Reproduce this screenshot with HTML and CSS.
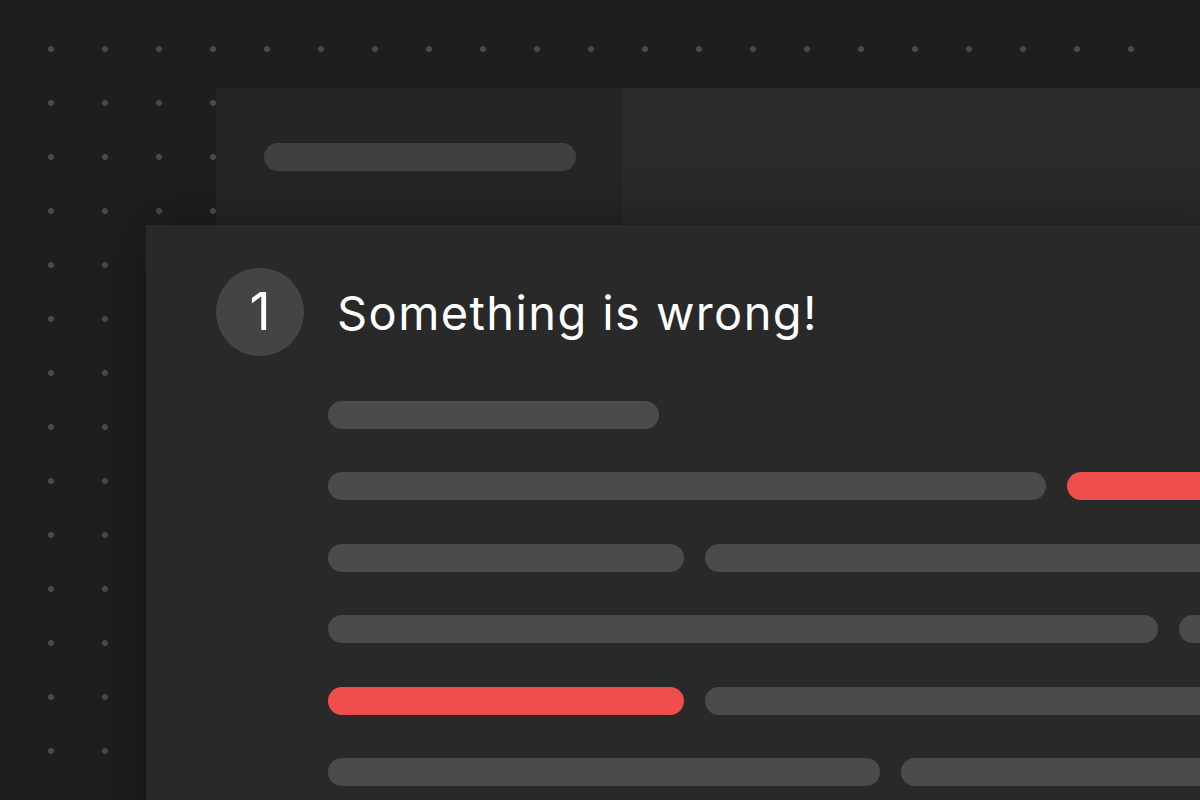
FILE: index.html
```html
<!DOCTYPE html>
<html lang="en">
<head>
<meta charset="utf-8">
<title>Something is wrong</title>
<link rel="stylesheet" href="styles.css">
</head>
<body>
<div class="scene">
  <div class="back-panel">
    <div class="back-left"><div class="pill"></div></div>
    <div class="back-right"></div>
  </div>
  <div class="card">
    <div class="card-header">
      <div class="step">1</div>
      <h1 class="title">Something is wrong!</h1>
    </div>
    <div class="lines">
      <div class="row"><span class="bar" style="width:331px"></span></div>
      <div class="row"><span class="bar" style="width:718px"></span><span class="bar bar-error bar-fill"></span></div>
      <div class="row"><span class="bar" style="width:356px"></span><span class="bar bar-fill"></span></div>
      <div class="row"><span class="bar" style="width:830px"></span><span class="bar bar-fill"></span></div>
      <div class="row"><span class="bar bar-error" style="width:356px"></span><span class="bar bar-fill"></span></div>
      <div class="row"><span class="bar" style="width:552px"></span><span class="bar bar-fill"></span></div>
    </div>
  </div>
</div>
</body>
</html>
```
FILE: styles.css
```css
html, body {
  margin: 0;
  padding: 0;
  width: 1200px;
  height: 800px;
  overflow: hidden;
  background: #1e1e1e;
  font-family: Inter, "Noto Sans", "Liberation Sans", sans-serif;
}

.scene {
  margin: 22px 0 0 24px;
  width: 1134px;
  height: 778px;
  background-image: radial-gradient(circle at center, #4a4a4a 0, #4a4a4a 2.6px, rgba(74,74,74,0) 3.4px);
  background-size: 54px 54px;
  background-position: 0 0;
}

.back-panel {
  margin-left: 192px;
  padding-top: 66px;
  display: flex;
  width: 1100px;
}

.back-left {
  width: 406px;
  height: 137px;
  background: #252525;
  padding: 55px 0 0 48px;
  box-sizing: border-box;
}

.pill {
  width: 312px;
  height: 28px;
  border-radius: 14px;
  background: #404040;
}

.back-right {
  flex: 1;
  height: 137px;
  background: #2a2a2a;
}

.card {
  position: relative;
  margin-left: 122px;
  width: 1100px;
  height: 700px;
  background: #292929;
  box-shadow: 0 0 50px rgba(0, 0, 0, 0.35);
  padding: 43px 0 0 70px;
  box-sizing: border-box;
}

.card-header {
  display: flex;
  align-items: center;
  gap: 33px;
}

.step {
  width: 88px;
  height: 88px;
  border-radius: 50%;
  background: #444444;
  color: #ffffff;
  font-size: 52px;
  font-weight: 400;
  display: flex;
  align-items: center;
  justify-content: center;
  line-height: 1;
}

.title {
  margin: 0;
  color: #ffffff;
  font-size: 47px;
  font-weight: 400;
  line-height: 1;
  letter-spacing: 1.4px;
}

.lines {
  margin: 45px 0 0 112px;
  display: flex;
  flex-direction: column;
  gap: 43.4px;
}

.row {
  display: flex;
  gap: 21px;
  height: 28px;
}

.bar {
  display: block;
  flex: none;
  height: 28px;
  border-radius: 14px;
  background: #4b4b4b;
}

.bar-fill {
  flex: 1;
}

.bar-error {
  background: #f04d4d;
}
```
